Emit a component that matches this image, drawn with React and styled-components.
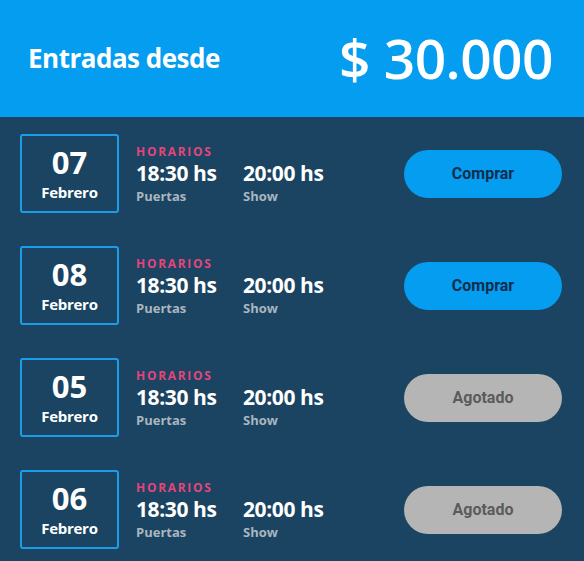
import React from "react";
import styled, { createGlobalStyle } from "styled-components";

const GlobalStyle = createGlobalStyle`
  html, body {
    margin: 0;
    padding: 0;
    background: #1a4461;
  }
  body {
    font-family: "Open Sans", "Noto Sans", sans-serif;
  }
`;

const fechas = [
  { dia: "07", mes: "Febrero", puertas: "18:30 hs", show: "20:00 hs", agotado: false },
  { dia: "08", mes: "Febrero", puertas: "18:30 hs", show: "20:00 hs", agotado: false },
  { dia: "05", mes: "Febrero", puertas: "18:30 hs", show: "20:00 hs", agotado: true },
  { dia: "06", mes: "Febrero", puertas: "18:30 hs", show: "20:00 hs", agotado: true },
];

const App = () => {
  return (
    <Page>
      <GlobalStyle />
      <Header>
        <HeaderLabel>Entradas desde</HeaderLabel>
        <Price>$ 30.000</Price>
      </Header>
      <List>
        {fechas.map((f) => (
          <Row key={f.dia}>
            <DateBox>
              <Day>{f.dia}</Day>
              <Month>{f.mes}</Month>
            </DateBox>
            <Info>
              <Label>HORARIOS</Label>
              <Times>
                <TimeCol>
                  <Time>{f.puertas}</Time>
                  <Caption>Puertas</Caption>
                </TimeCol>
                <TimeCol>
                  <Time>{f.show}</Time>
                  <Caption>Show</Caption>
                </TimeCol>
              </Times>
            </Info>
            <Button disabled={f.agotado} $soldOut={f.agotado}>
              {f.agotado ? "Agotado" : "Comprar"}
            </Button>
          </Row>
        ))}
      </List>
    </Page>
  );
};

const Page = styled.div`
  width: 584px;
  min-height: 561px;
  background: #1a4461;
`;

const Header = styled.header`
  height: 117px;
  background: #049df0;
  display: flex;
  align-items: center;
  justify-content: space-between;
  padding: 0 31px 0 28px;
  box-sizing: border-box;
  color: #fff;
`;

const HeaderLabel = styled.h2`
  margin: 0 0 2px;
  font-size: 26px;
  font-weight: 700;
  letter-spacing: -0.5px;
`;

const Price = styled.span`
  font-size: 55px;
  font-weight: 600;
  letter-spacing: -0.5px;
  line-height: 1;
  margin-top: -3px;
`;

const List = styled.div`
  display: flex;
  flex-direction: column;
  gap: 33px;
  padding: 17px 22px 0 20px;
`;

const Row = styled.div`
  display: flex;
  align-items: center;
`;

const DateBox = styled.div`
  width: 99px;
  height: 79px;
  box-sizing: border-box;
  border: 2px solid #1b9de8;
  border-radius: 3px;
  display: flex;
  flex-direction: column;
  align-items: center;
  justify-content: center;
  color: #fff;
  font-weight: 700;
`;

const Day = styled.span`
  font-size: 31px;
  line-height: 40px;
  margin-top: -3px;
`;

const Month = styled.span`
  font-size: 15px;
  line-height: 21px;
  letter-spacing: -0.3px;
`;

const Info = styled.div`
  margin-left: 17px;
  display: flex;
  flex-direction: column;
  margin-top: 1px;
`;

const Label = styled.span`
  color: #e2467c;
  font-size: 12px;
  font-weight: 700;
  letter-spacing: 1.7px;
  line-height: 16px;
`;

const Times = styled.div`
  display: flex;
`;

const TimeCol = styled.div`
  width: 107px;
  display: flex;
  flex-direction: column;
`;

const Time = styled.span`
  color: #fff;
  font-size: 21px;
  font-weight: 700;
  line-height: 27px;
  letter-spacing: -0.4px;
`;

const Caption = styled.span`
  color: #a9b5c0;
  font-size: 13px;
  font-weight: 700;
  line-height: 18px;
`;

const Button = styled.button`
  margin-left: auto;
  width: 158px;
  height: 48px;
  border: none;
  border-radius: 24px;
  font-family: Roboto, sans-serif;
  font-size: 16px;
  font-weight: 700;
  cursor: ${(p) => (p.$soldOut ? "default" : "pointer")};
  background: ${(p) => (p.$soldOut ? "#b5b5b5" : "#049df0")};
  color: ${(p) => (p.$soldOut ? "#5b5b5b" : "#132d4d")};
`;

export default App;
